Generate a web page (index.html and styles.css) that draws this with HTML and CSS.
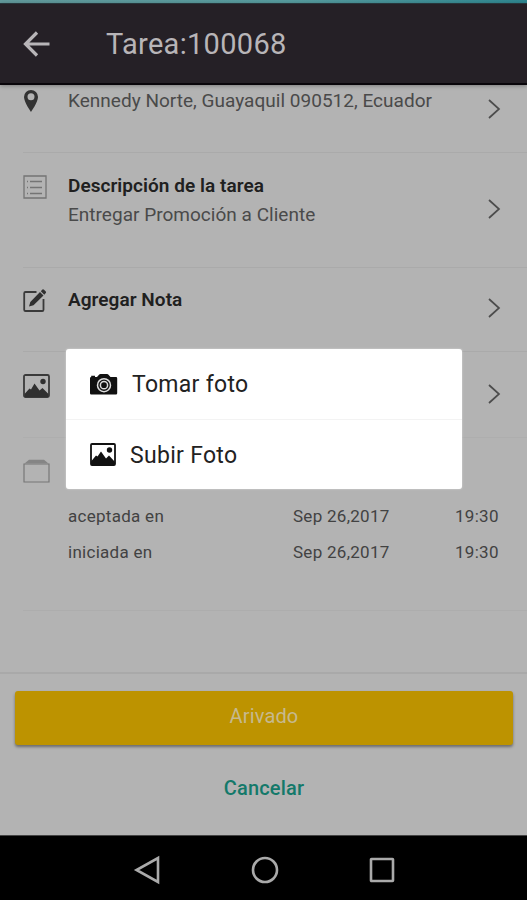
FILE: index.html
```html
<!DOCTYPE html>
<html lang="es">
<head>
<meta charset="utf-8">
<title>Tarea:100068</title>
<link rel="stylesheet" href="styles.css">
</head>
<body>
<div class="screen">
  <div class="status"></div>
  <header class="appbar">
    <svg class="back" viewBox="0 0 28 28"><path d="M26.500 14H3M14 2.500L2.500 14L14 25.500"/></svg>
    <h1 class="title">Tarea:100068</h1>
  </header>
  <main class="list">
    <section class="row row-address">
      <svg class="icon pin" viewBox="0 0 14 22"><path fill-rule="evenodd" d="M7 0A7 7 0 0 0 0 7C0 12 7 22 7 22S14 12 14 7A7 7 0 0 0 7 0ZM7 3.300A3.500 3.500 0 1 1 7 10.300A3.500 3.500 0 1 1 7 3.300Z"/></svg>
      <div class="copy"><p class="text address">Kennedy Norte, Guayaquil 090512, Ecuador</p></div>
      <svg class="chevron" viewBox="0 0 12 20"><path d="M1 1L11 10L1 19"/></svg>
    </section>
    <section class="row row-description">
      <svg class="icon doc" viewBox="0 0 24 24"><path d="M1 1H23V23H1Z"/><path d="M4 6.500H5M7 6.500H19M4 12.500H5M7 12.500H19M4 18.500H5M7 18.500H19"/></svg>
      <div class="copy">
        <h2 class="heading description-title">Descripción de la tarea</h2>
        <p class="text description">Entregar Promoción a Cliente</p>
      </div>
      <svg class="chevron" viewBox="0 0 12 20"><path d="M1 1L11 10L1 19"/></svg>
    </section>
    <section class="row row-note">
      <svg class="icon edit" viewBox="0 0 24 24"><path d="M13.500 3H2.500Q1.200 3 1.200 4.300V20.700Q1.200 22 2.500 22H19.200Q20.500 22 20.500 20.700V10"/><path class="fill" d="M6 17.500L7.300 13L17 3L20.500 6.500L10.500 16.200ZM17.800 2.200L19.400 .6Q20.200 0 21 .7L22.800 2.500Q23.400 3.300 22.800 4L21.300 5.700Z"/></svg>
      <div class="copy"><h2 class="heading note">Agregar Nota</h2></div>
      <svg class="chevron" viewBox="0 0 12 20"><path d="M1 1L11 10L1 19"/></svg>
    </section>
    <section class="row row-photo">
      <svg class="icon picture" viewBox="0 0 27 24"><rect x="1" y="1" width="25" height="22" rx="1.500"/><path class="fill" d="M1.500 20L6.500 14.500L8 15.500L11.500 9.500L16.500 16.500L19.500 14L25.500 20V23H1.500Z"/><circle class="fill" cx="20" cy="7.500" r="2.700"/></svg>
      <div class="copy"></div>
      <svg class="chevron" viewBox="0 0 12 20"><path d="M1 1L11 10L1 19"/></svg>
    </section>
    <section class="row row-history">
      <svg class="icon folder" viewBox="0 0 27 24"><path d="M1 5H26V23H1Z"/><path class="flap" d="M1.500 4.500L6 .8H21L25.500 4.500Z"/></svg>
      <div class="history">
        <span>aceptada en</span><span>Sep 26,2017</span><span>19:30</span>
        <span>iniciada en</span><span>Sep 26,2017</span><span>19:30</span>
      </div>
    </section>
  </main>
  <footer class="actions">
    <button class="primary">Arivado</button>
    <button class="cancel">Cancelar</button>
  </footer>
  <nav class="navbar">
    <svg viewBox="0 0 28 28"><path d="M24 2V26L2.500 14Z"/></svg>
    <svg viewBox="0 0 28 28"><circle cx="14" cy="14" r="12"/></svg>
    <svg viewBox="0 0 28 28"><rect x="3" y="3" width="22" height="22" rx=".5"/></svg>
  </nav>
  <div class="dialog">
    <div class="option">
      <svg class="camera" viewBox="0 0 28 21"><path d="M0 4.200Q0 3 1.200 3V1.800H5V3H7L9 .8Q9.500 0 10.500 0H17Q18 0 18.500 .8L20.500 3H26Q27.200 3 27.200 4.200V19.300Q27.200 20.500 26 20.500H1.200Q0 20.500 0 19.300Z"/><circle class="ring" cx="14" cy="11.200" r="6.500"/><circle class="lens" cx="14" cy="11.200" r="3.600"/></svg>
      <span>Tomar foto</span>
    </div>
    <div class="option">
      <svg class="upload" viewBox="0 0 26 23"><rect x="1" y="1" width="24" height="21" rx="1"/><path class="fill" d="M1 18.500L6 12.500L7.500 13.500L11 8.500L16 15.500L19 12.500L25 19V22H1Z"/><circle class="fill" cx="19.500" cy="7" r="2.700"/></svg>
      <span>Subir Foto</span>
    </div>
  </div>
</div>
</body>
</html>
```
FILE: styles.css
```css
* { box-sizing: border-box; }
body { margin: 0; font-family: Roboto, "Liberation Sans", sans-serif; }
h1, h2, p { margin: 0; }
svg { display: block; flex: none; overflow: visible; }
button { border: 0; padding: 0; font: inherit; }

.screen { position: relative; width: 527px; height: 900px; display: flex; flex-direction: column; overflow: hidden; background: #b3b3b3; }
.status { height: 3px; flex: none; background: linear-gradient(90deg, #62999b, #579b9e 55%, #2f8791); }
.appbar { height: 82px; flex: none; display: flex; align-items: center; padding: 0 0 0 23px; background: #252026; border-top: 1px solid #27363b; border-bottom: 2px solid #09050a; box-shadow: 0 1px 4px rgba(0,0,0,.3); }
.back { width: 28px; height: 28px; fill: none; stroke: #b8b5b8; stroke-width: 3.2; }
.title { margin-left: 55px; color: #b8b5b8; font-size: 29px; font-weight: 400; line-height: 40px; letter-spacing: .3px; white-space: nowrap; }

.list { height: 587px; flex: none; }
.row { display: flex; align-items: flex-start; margin-left: 23px; padding-right: 27px; border-bottom: 1px solid #aaa; }
.row-address { height: 68px; }
.row-description { height: 115px; }
.row-note { height: 84px; }
.row-photo { height: 86px; border-color: #aeaeae; }
.row-history { height: 173px; border-color: #adadad; }
.copy { flex: 1; white-space: nowrap; }
.icon { fill: none; stroke: #3a3a3a; stroke-width: 1.8; }
.fill { fill: #303030; stroke: none; }
.pin { width: 14px; height: 22px; margin: 5px 30px 0 1px; fill: #333; stroke: none; }
.doc { width: 24px; height: 24px; margin: 22px 21px 0 0; stroke: #747474; stroke-width: 1.3; }
.edit { width: 24px; height: 24px; margin: 21px 21px 0 0; }
.picture { width: 27px; height: 24px; margin: 22px 18px 0 0; }
.folder { width: 27px; height: 24px; margin: 21px 18px 0 0; stroke: #777; stroke-width: 1.2; }
.flap { fill: #858585; stroke: none; }
.chevron { width: 12px; height: 20px; fill: none; stroke: #4c4c4c; stroke-width: 1.7; }
.row-address .chevron { margin-top: 14px; }
.row-description .chevron { margin-top: 46px; }
.row-note .chevron { margin-top: 30px; }
.row-photo .chevron { margin-top: 32px; }
.text { color: #4a4a4a; font-size: 19px; line-height: 28px; letter-spacing: .02px; }
.address { margin-top: 2px; }
.heading { color: #202020; font-size: 19px; line-height: 28px; font-weight: 600; letter-spacing: .05px; }
.description-title { margin-top: 19px; }
.description { margin-top: 1px; }
.note { margin-top: 18px; }
.history { display: grid; grid-template-columns: 225px 162px 50px; grid-auto-rows: 36px; margin-top: 60px; color: #424242; font-size: 17px; line-height: 36px; letter-spacing: .28px; white-space: nowrap; }

.actions { height: 163px; flex: none; border-top: 2px solid #a9a9a9; padding: 17px 14px 0 15px; display: flex; flex-direction: column; align-items: stretch; }
.primary { height: 54px; border-radius: 3px; background: #bd9300; color: #c6b98e; font-size: 20px; line-height: 50px; letter-spacing: .15px; padding-bottom: 4px; box-shadow: 0 2px 3px rgba(0,0,0,.4); }
.cancel { height: 40px; margin-top: 23px; background: none; color: #14796a; font-size: 20px; font-weight: 500; letter-spacing: .15px; line-height: 40px; }
.navbar { height: 65px; flex: none; background: #000; border-top: 1px solid #444; display: flex; align-items: center; gap: 89px; padding: 4px 0 0 134px; }
.navbar svg { width: 28px; height: 28px; fill: none; stroke: #aaa; stroke-width: 2.6; }

.dialog { position: absolute; left: 66px; top: 349px; width: 396px; height: 140px; background: #fff; border-radius: 3px; box-shadow: 0 0 2px #ddd; }
.option { height: 70px; display: flex; align-items: center; padding-left: 24px; color: #222; font-size: 23px; line-height: 32px; letter-spacing: .3px; white-space: nowrap; }
.option + .option { border-top: 1px solid #f3f3f3; }
.option span { padding-top: 2px; }
.camera { width: 28px; height: 21px; margin-right: 14px; fill: #111; }
.ring, .lens { fill: none; stroke: #ddd; stroke-width: 1.5; }
.upload { width: 26px; height: 23px; margin-right: 14px; fill: none; stroke: #111; stroke-width: 1.8; }
.upload .fill { fill: #111; }
```
